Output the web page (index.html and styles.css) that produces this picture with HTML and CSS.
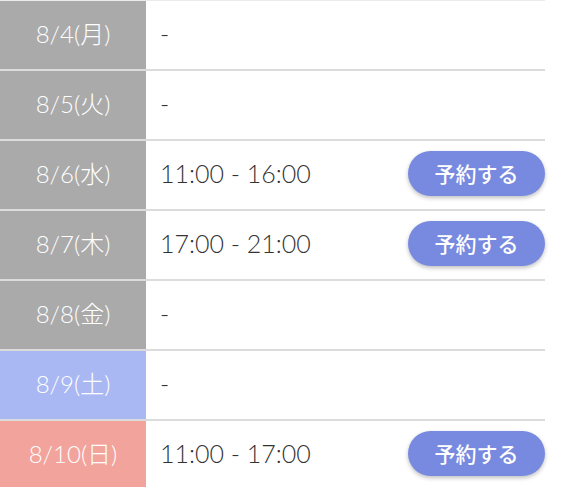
FILE: index.html
```html
<!DOCTYPE html>
<html lang="ja">
<head>
<meta charset="utf-8">
<link rel="stylesheet" href="styles.css">
</head>
<body>
<div class="schedule">
  <div class="row"><div class="date weekday">8/4(月)</div><div class="slot"><span class="time">-</span></div></div>
  <div class="row"><div class="date weekday">8/5(火)</div><div class="slot"><span class="time">-</span></div></div>
  <div class="row"><div class="date weekday">8/6(水)</div><div class="slot"><span class="time">11:00 - 16:00</span><button class="reserve">予約する</button></div></div>
  <div class="row"><div class="date weekday">8/7(木)</div><div class="slot"><span class="time">17:00 - 21:00</span><button class="reserve">予約する</button></div></div>
  <div class="row"><div class="date weekday">8/8(金)</div><div class="slot"><span class="time">-</span></div></div>
  <div class="row"><div class="date saturday">8/9(土)</div><div class="slot"><span class="time">-</span></div></div>
  <div class="row"><div class="date sunday">8/10(日)</div><div class="slot"><span class="time">11:00 - 17:00</span><button class="reserve">予約する</button></div></div>
</div>
</body>
</html>
```
FILE: styles.css
```css
html, body {
  margin: 0;
  padding: 0;
  background: #fff;
}
body {
  font-family: Lato, "Noto Sans CJK JP", sans-serif;
  overflow: hidden;
}
.schedule {
  width: 545px;
  display: flex;
  flex-direction: column;
  margin-top: -1px;
}
.row {
  display: grid;
  grid-template-columns: 146px 1fr;
  height: 70px;
  border-top: 2px solid #dcdcdc;
  box-sizing: border-box;
}
.row:first-child {
  border-top-color: #ebebeb;
}
.date {
  display: flex;
  align-items: center;
  justify-content: center;
  color: #fff;
  font-size: 24px;
  font-weight: 300;
  padding-bottom: 5px;
}
.weekday { background: #aaaaaa; }
.saturday { background: #a9b8f2; }
.sunday { background: #f2a39b; }
.slot {
  display: flex;
  align-items: center;
  justify-content: space-between;
  padding-left: 14px;
  padding-bottom: 4px;
}
.time {
  font-size: 25px;
  font-weight: 300;
  color: #333;
}
.reserve {
  width: 137px;
  height: 45px;
  border: none;
  border-radius: 23px;
  background: #7889e0;
  color: #fff;
  font-family: "Noto Sans CJK JP", sans-serif;
  font-size: 21px;
  font-weight: 500;
  box-shadow: 0 2px 4px rgba(0,0,0,0.25);
  padding: 0;
}
```
